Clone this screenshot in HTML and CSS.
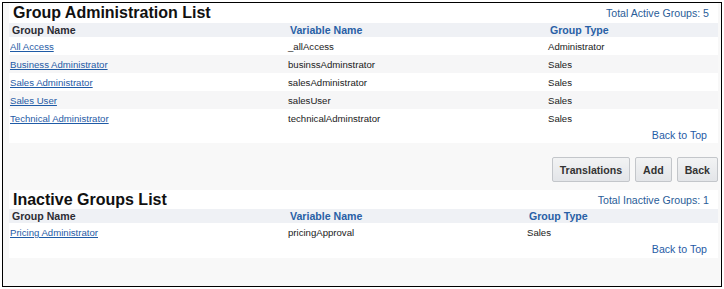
FILE: index.html
```html
<!DOCTYPE html>
<html lang="en">
<head>
  <meta charset="UTF-8" />
  <title>Group Administration List</title>
  <link rel="stylesheet" href="styles.css">
</head>
<body>
  <div class="page">
    <div class="panel">
      <div class="panel-head">
        <h2>Group Administration List</h2>
        <span class="total">Total Active Groups: 5</span>
      </div>
      <table class="groups active-groups">
        <colgroup><col class="c1"><col class="c2"><col></colgroup>
        <thead>
          <tr><th class="plain">Group Name</th><th>Variable Name</th><th>Group Type</th></tr>
        </thead>
        <tbody>
          <tr><td><a href="#">All Access</a></td><td>_allAccess</td><td>Administrator</td></tr>
          <tr><td><a href="#">Business Administrator</a></td><td>businssAdminstrator</td><td>Sales</td></tr>
          <tr><td><a href="#">Sales Administrator</a></td><td>salesAdministrator</td><td>Sales</td></tr>
          <tr><td><a href="#">Sales User</a></td><td>salesUser</td><td>Sales</td></tr>
          <tr><td><a href="#">Technical Administrator</a></td><td>technicalAdminstrator</td><td>Sales</td></tr>
        </tbody>
      </table>
      <div class="back-top"><a href="#">Back to Top</a></div>
    </div>

    <div class="actions">
      <button>Translations</button>
      <button>Add</button>
      <button>Back</button>
    </div>

    <div class="panel">
      <div class="panel-head inactive">
        <h2>Inactive Groups List</h2>
        <span class="total">Total Inactive Groups: 1</span>
      </div>
      <table class="groups inactive-groups">
        <colgroup><col class="c1"><col class="c2"><col></colgroup>
        <thead>
          <tr><th class="plain">Group Name</th><th>Variable Name</th><th>Group Type</th></tr>
        </thead>
        <tbody>
          <tr><td><a href="#">Pricing Administrator</a></td><td>pricingApproval</td><td>Sales</td></tr>
        </tbody>
      </table>
      <div class="back-top last"><a href="#">Back to Top</a></div>
    </div>
  </div>
</body>
</html>
```

FILE: styles.css
```css
body {
  margin: 0;
  font-family: 'Liberation Sans', Arial, sans-serif;
  color: #1a1a1a;
}

.page {
  margin: 2px;
  height: 285px;
  box-sizing: border-box;
  border: 1px solid #000;
  background-color: #f8f8f8;
  padding: 0 3px 0 6px;
}

.panel {
  background: #fff;
}

.panel-head {
  display: flex;
  justify-content: space-between;
  align-items: center;
  height: 20px;
  padding: 0 9px 0 4px;
}

.panel-head.inactive {
  height: 19px;
}

.panel-head h2 {
  margin: 0;
  font-size: 16px;
  font-weight: bold;
  color: #111;
}

.total {
  font-size: 10.6px;
  color: #2a5d98;
}

.groups {
  width: 100%;
  border-collapse: collapse;
  table-layout: fixed;
}

.groups .c1 {
  width: 278px;
}

.active-groups .c2 {
  width: 260px;
}

.inactive-groups .c2 {
  width: 239px;
}

.groups th {
  height: 14px;
  padding: 0 0 0 3px;
  background: #eff1f5;
  text-align: left;
  font-size: 10.6px;
  font-weight: bold;
  color: #2860a6;
}

.groups th.plain {
  color: #2b2b33;
}

.groups td {
  height: 18px;
  padding: 0 0 0 1px;
  font-size: 9.6px;
  white-space: nowrap;
}

.groups tbody tr:nth-child(even) td {
  background: #f6f6f7;
}

.groups a {
  color: #1f5ba6;
}

.back-top {
  height: 16px;
  line-height: 17px;
  text-align: right;
  padding-right: 11px;
  font-size: 10.6px;
}

.back-top.last {
  height: 17px;
}

.back-top a {
  color: #1f5ba6;
  text-decoration: none;
}

.actions {
  display: flex;
  justify-content: flex-end;
  gap: 5px;
  padding: 14px 0 8px;
}

.actions button {
  height: 25px;
  padding: 0 7px;
  font-family: inherit;
  font-size: 10.6px;
  font-weight: bold;
  color: #333;
  background: linear-gradient(#f2f3f4, #e3e5e8);
  border: 1px solid #c3c6ca;
  border-radius: 2px;
}
```
